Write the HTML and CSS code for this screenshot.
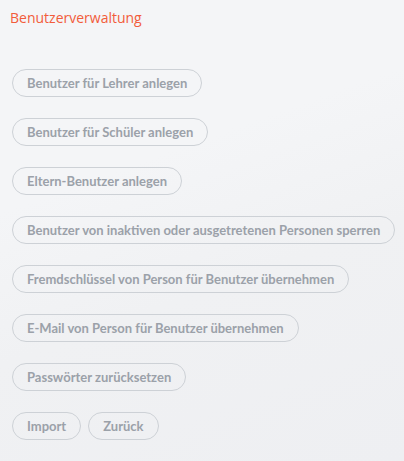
FILE: index.html
```html
<!DOCTYPE html>
<html lang="de">
<head>
<meta charset="utf-8">
<title>Benutzerverwaltung</title>
<link rel="stylesheet" href="styles.css">
</head>
<body>
<main class="page">
  <h1 class="title">Benutzerverwaltung</h1>
  <div class="actions">
    <div class="row"><button class="btn">Benutzer für Lehrer anlegen</button></div>
    <div class="row"><button class="btn">Benutzer für Schüler anlegen</button></div>
    <div class="row"><button class="btn">Eltern-Benutzer anlegen</button></div>
    <div class="row"><button class="btn">Benutzer von inaktiven oder ausgetretenen Personen sperren</button></div>
    <div class="row"><button class="btn">Fremdschlüssel von Person für Benutzer übernehmen</button></div>
    <div class="row"><button class="btn">E-Mail von Person für Benutzer übernehmen</button></div>
    <div class="row"><button class="btn">Passwörter zurücksetzen</button></div>
    <div class="row"><button class="btn">Import</button><button class="btn">Zurück</button></div>
  </div>
</main>
</body>
</html>
```

FILE: styles.css
```css
html, body {
  margin: 0;
  padding: 0;
  height: 100%;
}
body {
  background: linear-gradient(160deg, #f4f5f7 0%, #f4f5f7 35%, #f0f1f3 60%, #eeeff2 100%);
  font-family: "Open Sans", "Liberation Sans", sans-serif;
}
.page {
  padding: 9px 12px 0 10px;
}
.title {
  margin: 0;
  font-size: 14px;
  font-weight: 400;
  line-height: 17px;
  color: #f25c3b;
}
.actions {
  display: flex;
  flex-direction: column;
  gap: 21px;
  margin-top: 43px;
  padding-left: 2px;
}
.row {
  display: flex;
  gap: 7px;
}
.btn {
  height: 28px;
  padding: 0 14px;
  border: 1px solid #cdd1d6;
  border-radius: 14px;
  background: transparent;
  color: #9ba1a9;
  font-family: Lato, "Liberation Sans", sans-serif;
  font-size: 13px;
  font-weight: 700;
  white-space: nowrap;
}
```
